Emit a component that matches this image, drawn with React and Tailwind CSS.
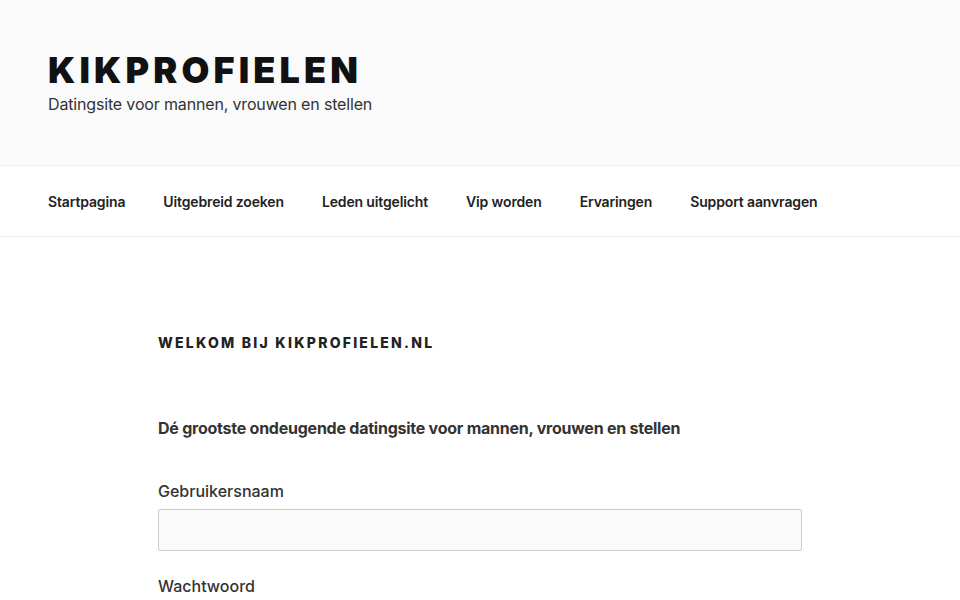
import React from 'react';

const menu = ['Startpagina', 'Uitgebreid zoeken', 'Leden uitgelicht', 'Vip worden', 'Ervaringen', 'Support aanvragen'];

const App = () => {
  return (
    <div className="min-h-screen bg-white text-[#333] font-['Inter','Liberation_Sans',sans-serif]">
      <header className="bg-[#fafafa] h-[165px] px-12 pt-[48px]">
        <h1 className="text-[36px] leading-[44px] font-black tracking-[0.115em] uppercase text-[#111]">Kikprofielen</h1>
        <p className="text-[16px] leading-[24px] text-[#333] tracking-[-0.01em]">Datingsite voor mannen, vrouwen en stellen</p>
      </header>

      <nav className="h-[72px] border-y border-[#eee] px-12 flex items-center gap-[38px]">
        {menu.map((item) => (
          <a key={item} className="text-[14px] font-semibold text-[#222] tracking-[-0.01em]">{item}</a>
        ))}
      </nav>

      <main className="w-[644px] mx-auto pt-[96px]">
        <h2 className="text-[14px] leading-[20px] font-extrabold tracking-[0.16em] uppercase text-[#222]">Welkom bij kikprofielen.nl</h2>

        <p className="mt-[63px] text-[16px] leading-[24px] font-bold text-[#333] tracking-[-0.015em]">Dé grootste ondeugende datingsite voor mannen, vrouwen en stellen</p>

        <form className="mt-[39px]">
          <label className="block text-[16px] leading-[24px] font-medium text-[#333]">Gebruikersnaam</label>
          <input type="text" className="mt-[6px] block w-full h-[42px] bg-[#fafafa] border border-[#ccc] rounded-[2px]" />
          <label className="block mt-[23px] text-[16px] leading-[24px] font-medium text-[#333]">Wachtwoord</label>
          <input type="password" className="mt-[6px] block w-full h-[42px] bg-[#fafafa] border border-[#ccc] rounded-[2px]" />
        </form>
      </main>
    </div>
  );
};

export default App;
